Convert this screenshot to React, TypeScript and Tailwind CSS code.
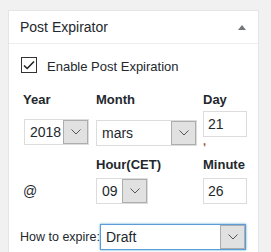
import { ReactNode } from "react";

function Chevron() {
    return (
        <svg width="10" height="6" viewBox="0 0 10 6" fill="none">
            <path d="M0.5 0.5L5 5L9.5 0.5" stroke="#555" strokeWidth="1" />
        </svg>
    );
}

function Select({ value, width, focused }: { value: string; width: string; focused?: boolean }) {
    return (
        <div
            className={`${width} shrink-0 h-[26px] flex items-stretch bg-white border ${
                focused
                    ? "border-[#5b9dd9] shadow-[0_0_2px_rgba(30,140,190,0.8)]"
                    : "border-[#dcdcdc]"
            }`}
        >
            <span className="flex-1 flex items-center pl-[5px] text-[14px] text-[#23282d]">{value}</span>
            <span className="w-[25px] flex items-center justify-center bg-[#e1e1e1] border border-[#adadad]">
                <Chevron />
            </span>
        </div>
    );
}

function Input({ value }: { value: string }) {
    return (
        <div className="w-[44px] h-[26px] border border-[#dcdcdc] bg-white flex items-center pl-[4px] text-[14px] text-[#23282d]">
            {value}
        </div>
    );
}

function Label({ children }: { children: ReactNode }) {
    return <div className="h-[16px] leading-[16px] text-[13px] font-bold text-[#23282d]">{children}</div>;
}

export default function App() {
    return (
        <div className="h-screen overflow-hidden bg-[#f1f1f1] pt-[10px] pl-[8px] font-['Liberation_Sans',Arial,sans-serif]">
            <div className="w-[251px] h-[242px] border border-b-0 border-[#e5e5e5] bg-white">
                <div className="h-[33px] border-b border-[#eee] flex items-center justify-between pl-[11px] pr-[12px]">
                    <span className="text-[14px] leading-[16px] text-[#23282d]">Post Expirator</span>
                    <svg width="8" height="5" viewBox="0 0 8 5">
                        <path d="M0 5L4 0L8 5Z" fill="#72777c" />
                    </svg>
                </div>

                <div className="pl-[12px] pt-[13px] flex items-start gap-[10px]">
                    <span className="w-[16px] h-[16px] border border-[#333] flex items-center justify-center">
                        <svg width="12" height="10" viewBox="0 0 12 10" fill="none">
                            <path d="M1 5.5L4.2 8.5L11 1.5" stroke="#222" strokeWidth="1.6" />
                        </svg>
                    </span>
                    <span className="text-[13px] leading-[16px] mt-[2px] text-[#23282d]">Enable Post Expiration</span>
                </div>

                <div className="pl-[14px] pt-[17px] grid grid-cols-[73px_107px_1fr]">
                    <Label>Year</Label>
                    <Label>Month</Label>
                    <Label>Day</Label>

                    <div className="pt-[11px] pl-[1px]">
                        <Select value="2018" width="w-[65px]" />
                    </div>
                    <div className="pt-[12px]">
                        <Select value="mars" width="w-[101px]" />
                    </div>
                    <div className="pt-[3px]">
                        <Input value="21" />
                        <div className="h-[9px] leading-[9px] text-[11px] font-bold text-[#9a4a1c] pl-[0px]">,</div>
                    </div>

                    <div className="pt-[11px]" />
                    <div className="pt-[11px]">
                        <Label>Hour(CET)</Label>
                    </div>
                    <div className="pt-[11px]">
                        <Label>Minute</Label>
                    </div>

                    <div className="pt-[5px] h-[31px] flex items-end pb-[5px] text-[14px] leading-[16px] text-[#23282d]">@</div>
                    <div className="pt-[5px]">
                        <Select value="09" width="w-[52px]" />
                    </div>
                    <div className="pt-[5px]">
                        <Input value="26" />
                    </div>
                </div>

                <div className="pl-[11px] pt-[20px] flex items-center">
                    <span className="w-[80px] whitespace-nowrap text-[12.5px] leading-[16px] text-[#23282d]">How to expire:</span>
                    <Select value="Draft" width="w-[146px]" focused />
                </div>
            </div>
        </div>
    );
}
